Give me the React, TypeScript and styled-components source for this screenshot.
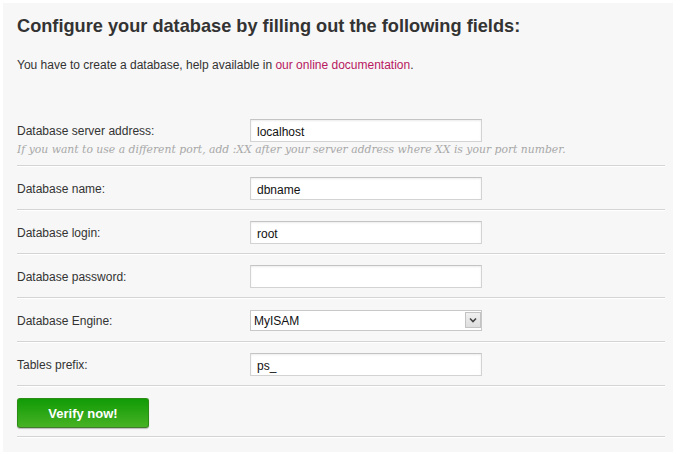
import { Fragment } from 'react';
import styled, { createGlobalStyle } from 'styled-components';

const GlobalStyle = createGlobalStyle`
    body {
        margin: 0;
        background: #ffffff;
        font-family: 'Liberation Sans', Arial, sans-serif;
        color: #333333;
    }
`;

const Panel = styled.div`
    margin: 3px 9px 3px 3px;
    background: #f7f7f7;
    padding: 12px 8px 14px 14px;
`;
const Title = styled.h2`
    margin: 0;
    font-size: 18.2px;
    line-height: 22px;
    font-weight: bold;
    color: #333333;
`;
const Intro = styled.p`
    margin: 20px 0 36px 0;
    font-size: 12px;
    line-height: 16px;
    color: #333333;
`;
const DocLink = styled.a`
    color: #b8195f;
    text-decoration: none;
`;
const Form = styled.form`
    margin: 0;
`;
const Row = styled.div`
    padding: 10px 0 9px 0;
    border-bottom: 1px solid #d4d4d4;
    box-shadow: 0 1px 0 #ffffff;
    margin-bottom: 1px;
`;
const ButtonRow = styled(Row)`
    padding: 11px 0 8px 0;
`;
const Line = styled.div`
    display: flex;
    align-items: center;
`;
const Label = styled.label`
    width: 233px;
    font-size: 12px;
    color: #333333;
`;
const Field = styled.input`
    box-sizing: border-box;
    width: 232px;
    height: 23px;
    margin: 0;
    padding: 2px 6px 0 6px;
    border: 1px solid #d3d3d3;
    border-top-color: #c4c4c4;
    box-shadow: inset 0 1px 2px rgba(0, 0, 0, 0.08);
    background: #ffffff;
    font-family: 'Liberation Sans', Arial, sans-serif;
    font-size: 12px;
    color: #111111;
    outline: none;
`;
const SelectWrap = styled.div`
    position: relative;
    width: 232px;
    height: 21px;
    margin: 1px 0;
`;
const Select = styled.select`
    box-sizing: border-box;
    width: 100%;
    height: 21px;
    margin: 0;
    padding: 0 0 0 3px;
    border: 1px solid #c8c8c8;
    background: #ffffff;
    appearance: none;
    font-family: 'Liberation Sans', Arial, sans-serif;
    font-size: 12px;
    color: #111111;
    outline: none;
`;
const ArrowBox = styled.span`
    position: absolute;
    right: 1px;
    top: 2px;
    width: 16px;
    height: 16px;
    box-sizing: border-box;
    border: 1px solid #c3c3c3;
    background: linear-gradient(#f0f0f0, #dedede);
    display: flex;
    align-items: center;
    justify-content: center;
    pointer-events: none;
`;
const Hint = styled.div`
    margin-top: 2px;
    font-family: 'DejaVu Serif', Georgia, serif;
    font-style: italic;
    font-size: 10.8px;
    line-height: 12px;
    color: #a8a8a8;
    white-space: nowrap;
`;
const VerifyBtn = styled.button`
    width: 132px;
    height: 30px;
    margin: 0;
    border: 1px solid #2b8d14;
    border-bottom-color: #3f7d2c;
    border-radius: 3px;
    background: linear-gradient(#119b06, #47b224);
    box-shadow: 0 1px 1px rgba(0, 0, 0, 0.25);
    color: #ffffff;
    font-family: 'Liberation Sans', Arial, sans-serif;
    font-size: 13px;
    font-weight: bold;
    cursor: pointer;
`;

interface FieldType {
    id: string;
    label: string;
    value: string;
    type?: string;
}

const fields: FieldType[] = [
    { id: 'dbName', label: 'Database name:', value: 'dbname' },
    { id: 'dbLogin', label: 'Database login:', value: 'root' },
    { id: 'dbPassword', label: 'Database password:', value: '', type: 'password' }
];

function App() {
    return (
        <Fragment>
            <GlobalStyle />
            <Panel>
                <Title>Configure your database by filling out the following fields:</Title>
                <Intro>
                    You have to create a database, help available in{' '}
                    <DocLink href="#">our online documentation</DocLink>.
                </Intro>
                <Form onSubmit={(e) => e.preventDefault()}>
                    <Row>
                        <Line>
                            <Label htmlFor="dbServer">Database server address:</Label>
                            <Field id="dbServer" defaultValue="localhost" />
                        </Line>
                        <Hint>
                            If you want to use a different port, add :XX after your server address where XX is your port number.
                        </Hint>
                    </Row>
                    {fields.map((field) => (
                        <Row key={field.id}>
                            <Line>
                                <Label htmlFor={field.id}>{field.label}</Label>
                                <Field id={field.id} type={field.type || 'text'} defaultValue={field.value} />
                            </Line>
                        </Row>
                    ))}
                    <Row>
                        <Line>
                            <Label htmlFor="dbEngine">Database Engine:</Label>
                            <SelectWrap>
                                <Select id="dbEngine" defaultValue="MyISAM">
                                    <option value="MyISAM">MyISAM</option>
                                    <option value="InnoDB">InnoDB</option>
                                </Select>
                                <ArrowBox>
                                    <svg width="8" height="6" viewBox="0 0 8 6">
                                        <path d="M1 1.5 L4 4.5 L7 1.5" fill="none" stroke="#444" strokeWidth="1.6" />
                                    </svg>
                                </ArrowBox>
                            </SelectWrap>
                        </Line>
                    </Row>
                    <Row>
                        <Line>
                            <Label htmlFor="dbPrefix">Tables prefix:</Label>
                            <Field id="dbPrefix" defaultValue="ps_" />
                        </Line>
                    </Row>
                    <ButtonRow>
                        <VerifyBtn type="submit">Verify now!</VerifyBtn>
                    </ButtonRow>
                </Form>
            </Panel>
        </Fragment>
    );
}

export default App;
